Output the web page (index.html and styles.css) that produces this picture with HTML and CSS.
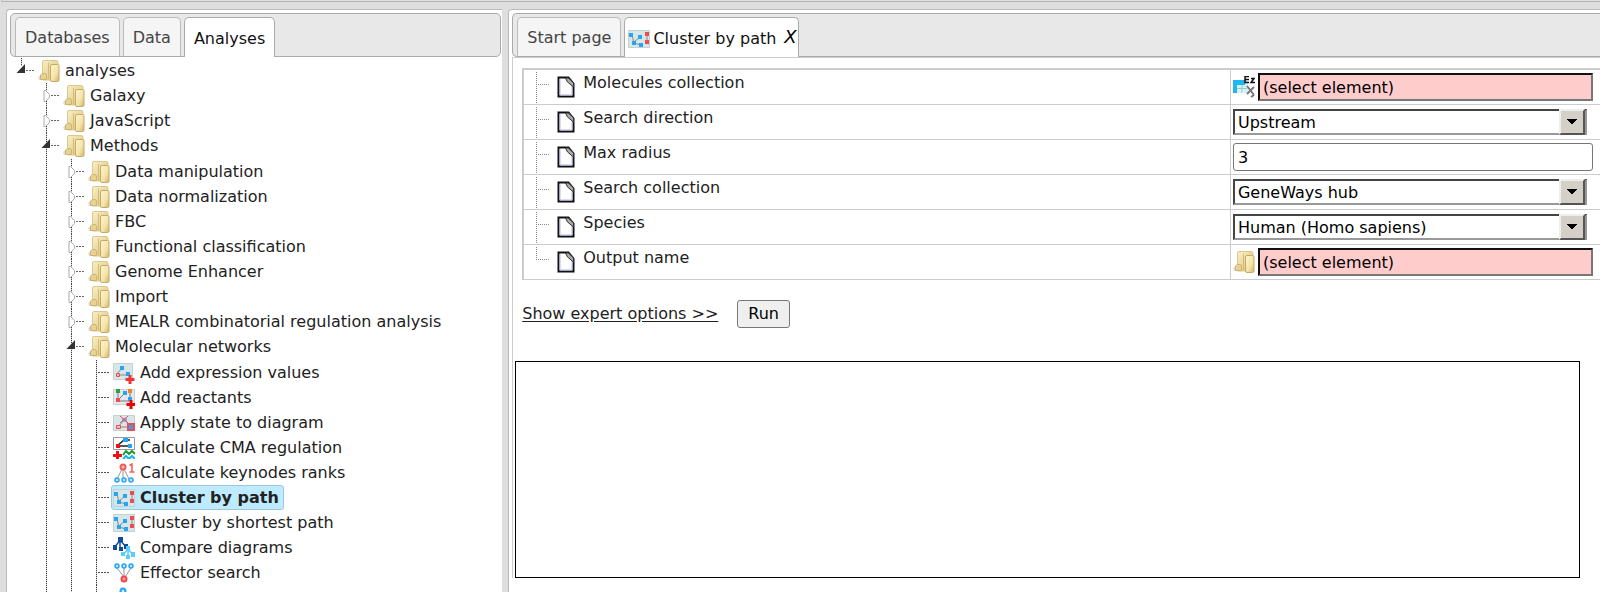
FILE: index.html
```html
<!DOCTYPE html>
<html lang="en">
<head>
<meta charset="utf-8">
<title>Cluster by path</title>
<link rel="stylesheet" href="styles.css">
</head>
<body>
<svg class="sprite" aria-hidden="true">
  <defs>
    <linearGradient id="gold" x1="0" y1="0" x2="1" y2="1">
      <stop offset="0" stop-color="#fbf0c4"/><stop offset="1" stop-color="#d9c07c"/>
    </linearGradient>
    <linearGradient id="page" x1="0" y1="0" x2="1" y2="1">
      <stop offset="0" stop-color="#fff6cf"/><stop offset=".6" stop-color="#f3e3a8"/><stop offset="1" stop-color="#cfb26a"/>
    </linearGradient>
    <symbol id="i-folder" viewBox="0 0 22 22">
      <path d="M0 17l3-2v5H1z" fill="#ddd"/>
      <path d="M4.500 2q0-1.500 1.500-1.500h12q2 0 2 1.500v12l-8 6h-7.500z" fill="url(#gold)" stroke="#dcc88f"/>
      <path d="M10.500 3v16" stroke="#d3bb78"/>
      <path d="M2.500 15l2-1.500h3l1 1.500v4.500h-6z" fill="#e8d292" stroke="#cdb473"/>
      <path d="M12.500 6q0-1.500 1.500-1.500h5.500q1.500 0 1.500 1.500v14q0 1.500-1.500 1.500H14q-1.500 0-1.500-1.500z" fill="url(#page)" stroke="#c7ab65"/>
    </symbol>
    <symbol id="i-closed" viewBox="0 0 22 25">
      <path d="M4 7.500v11h1.500l4-4v-3l-4-4z" fill="#fff" stroke="#aaa"/>
      <path d="M11 12.500h9" stroke="#666" stroke-dasharray="2 1"/>
    </symbol>
    <symbol id="i-open" viewBox="0 0 22 25">
      <path d="M10 6v9H1.500z" fill="#333"/>
      <path d="M11 12.500h9" stroke="#666" stroke-dasharray="2 1"/>
    </symbol>
    <symbol id="i-leaf" viewBox="0 0 22 25">
      <path d="M8 12.500h12" stroke="#555" stroke-dasharray="2 1"/>
    </symbol>
    <symbol id="i-cluster" viewBox="0 0 22 18">
      <path d="M.5.500h21v17H.5z" fill="#d9e6e8" stroke="#c3d1d3"/>
      <path d="M4 5l2 8 7 2M6 12l6-5M19 4v8" fill="none" stroke="#888"/>
      <path d="M1 3h4v4H1zM10 5h4v4h-4zM4 11h4v4H4zM11 13h4v4h-4z" fill="#25a5f5"/>
      <path d="M17 2h4v4h-4zM17 10h4v4h-4z" fill="#f04b50"/>
    </symbol>
    <symbol id="i-addval" viewBox="0 0 22 20">
      <path d="M.5.500h19v16H.5z" fill="#d9e6e8" stroke="#c3d1d3"/>
      <path d="M4 11l5-6M5 12h8" stroke="#888"/>
      <path d="M7 3h4v4H7zM13 9h4v4h-4z" fill="#25a5f5"/>
      <path d="M3.500 10.500h3v3h-3z" fill="#fbb" stroke="#f04b50"/>
      <path d="M15.500 12h3v3h3v3h-3v3h-3v-3h-3v-3h3z" fill="#e33"/>
    </symbol>
    <symbol id="i-addreact" viewBox="0 0 22 20">
      <path d="M.5 1.500h21v15H.5z" fill="#e4e8ee" stroke="#aaa" stroke-dasharray="1 1"/>
      <path d="M5 4v9h11M5 12l7-7M17 4v9" fill="none" stroke="#777"/>
      <path d="M3 1h4v4H3z" fill="#2ba33d"/><path d="M15 1h4v4h-4z" fill="#f58320"/>
      <path d="M10 3h4v4h-4zM15 9h4v4h-4z" fill="#25a5f5"/><path d="M3 10h4v4H3z" fill="#f04b50"/>
      <path d="M16.500 12h3v3h3v3h-3v3h-3v-3h-3v-3h3z" fill="#e00"/>
    </symbol>
    <symbol id="i-state" viewBox="0 0 22 20">
      <path d="M.5 2.500h21v15H.5z" fill="#d9e6e8" stroke="#c3d1d3"/>
      <path d="M5 14l7-8 5 8M5 14h12" fill="none" stroke="#888"/>
      <path d="M9 5h5v4H9z" fill="#8aa9e8"/><path d="M7 3l8 7M15 3l-8 7" stroke="#f04b50"/>
      <path d="M3.500 12.500h4v3h-4z" fill="#fbb" stroke="#f04b50"/>
      <path d="M15 11h6v6h-6z" fill="#25a5f5" stroke="#f04b50" stroke-width="2"/>
    </symbol>
    <symbol id="i-cma" viewBox="0 0 22 22">
      <path d="M.5.500h21v12H.5z" fill="#fff" stroke="#999"/>
      <path d="M4 9l7-6h6M5 9h12" fill="none" stroke="#222" stroke-width="1.500"/>
      <path d="M10 1h5v4h-5zM15 7h4v4h-4z" fill="#25a5f5"/><path d="M3 7h4v4H3z" fill="#e11"/>
      <path d="M3 14h3v3h3v3H6v3H3v-3H0v-3h3z" fill="#e11"/>
      <path d="M10 18l3-4 3 3 3-3 3 3" fill="none" stroke="#1f9a35" stroke-width="2"/>
      <path d="M10 22l3-3 3 3 3-3 3 3" fill="none" stroke="#18b5e8" stroke-width="2"/>
    </symbol>
    <symbol id="i-keynode" viewBox="0 0 22 20">
      <path d="M10 7v9M9 6l-5 10M11 6l5 10" stroke="#999"/>
      <circle cx="10" cy="4" r="2.500" fill="#fbb" stroke="#f25a5e" stroke-width="2"/>
      <path d="M16.500 2.500L19 1v8M16.500 9h5" fill="none" stroke="#f25a5e" stroke-width="1.500"/>
      <g fill="#bfe6ff" stroke="#25a5f5" stroke-width="1.500"><circle cx="4" cy="17" r="2"/><circle cx="11" cy="17" r="2"/><circle cx="18" cy="17" r="2"/></g>
    </symbol>
    <symbol id="i-compare" viewBox="0 0 22 22">
      <path d="M7 3L2 10M7 3v9M7 3l6 7" stroke="#1d4f9b" stroke-width="1.500"/>
      <path d="M5 0h5v5H5zM0 8h4v5H0zM6 10h4v4H6zM11 7h4v5h-4z" fill="#0e4b99"/>
      <path d="M15 12l-5 6M15 12v8M15 12l5 6" stroke="#5cc8fa" stroke-width="1.500"/>
      <path d="M13 9h4v5h-4zM8 15h4v4H8zM13 18h4v4h-4zM18 15h4v5h-4z" fill="#5ccdfd"/>
    </symbol>
    <symbol id="i-effector" viewBox="0 0 22 20">
      <path d="M4 5l7 9M11 5v9M18 5l-6 9" stroke="#999"/>
      <circle cx="11" cy="16" r="2.500" fill="#f99" stroke="#f0484e" stroke-width="2"/>
      <g fill="#bfe6ff" stroke="#25a5f5" stroke-width="1.500"><circle cx="4" cy="3" r="2"/><circle cx="11" cy="3" r="2"/><circle cx="18" cy="3" r="2"/></g>
    </symbol>
    <symbol id="i-chain" viewBox="0 0 22 20">
      <path d="M10 4v12" stroke="#999"/>
      <circle cx="10" cy="3" r="2.500" fill="#bfe6ff" stroke="#25a5f5" stroke-width="2"/>
      <circle cx="10" cy="16" r="2.500" fill="#f99" stroke="#f0484e" stroke-width="2"/>
    </symbol>
    <symbol id="i-doc" viewBox="0 0 18 22">
      <path d="M1.500 1.500h10l5 6v13h-15z" fill="#fff" stroke="#111" stroke-width="2"/>
      <path d="M3 3v16h12V9" fill="none" stroke="#b9b9ee"/>
      <path d="M8.500 2l2 4 6 5v-4l-5-5z" fill="#aaa" stroke="#333"/>
    </symbol>
    <symbol id="i-branch" viewBox="0 0 14 31">
      <path d="M1.500 0v31" stroke="#888" stroke-dasharray="1 1"/><path d="M3 12.500h11" stroke="#888" stroke-dasharray="1 1"/>
    </symbol>
    <symbol id="i-branch-end" viewBox="0 0 14 31">
      <path d="M1.500 0v13" stroke="#888" stroke-dasharray="1 1"/><path d="M3 12.500h11" stroke="#888" stroke-dasharray="1 1"/>
    </symbol>
    <symbol id="i-table" viewBox="0 0 22 22">
      <path d="M0 5h15v12H0z" fill="#d9f3f5"/><path d="M0 4h12v5H0zM0 9h4v8H0z" fill="#1fb6f2"/>
      <path d="M4 12.500h10M9 9v8" stroke="#9cc"/>
      <path d="M16 .5h-4v6h4M12 3.500h4M18 2.500h3l-3 4h4" fill="none" stroke="#111" stroke-width="1.500"/>
      <path d="M14 10l7 9M21 11l-7 7M18 21l3-2" stroke="#777" stroke-width="2"/>
    </symbol>
  </defs>
</svg>

<div class="topbar"></div>
<div class="workspace">
  <aside class="pane">
    <div class="tabs tabs-left" role="tablist">
      <button class="tab" role="tab">Databases</button>
      <button class="tab" role="tab">Data</button>
      <button class="tab active" role="tab" aria-selected="true">Analyses</button>
    </div>
    <ul class="tree root">
      <li><div class="node"><svg class="toggle"><use href="#i-open"/></svg><a href="#"><svg class="icon"><use href="#i-folder"/></svg>analyses</a></div>
        <ul class="tree">
          <li><div class="node"><svg class="toggle"><use href="#i-closed"/></svg><a href="#"><svg class="icon"><use href="#i-folder"/></svg>Galaxy</a></div></li>
          <li><div class="node"><svg class="toggle"><use href="#i-closed"/></svg><a href="#"><svg class="icon"><use href="#i-folder"/></svg>JavaScript</a></div></li>
          <li><div class="node"><svg class="toggle"><use href="#i-open"/></svg><a href="#"><svg class="icon"><use href="#i-folder"/></svg>Methods</a></div>
            <ul class="tree deep">
              <li><div class="node"><svg class="toggle"><use href="#i-closed"/></svg><a href="#"><svg class="icon"><use href="#i-folder"/></svg>Data manipulation</a></div></li>
              <li><div class="node"><svg class="toggle"><use href="#i-closed"/></svg><a href="#"><svg class="icon"><use href="#i-folder"/></svg>Data normalization</a></div></li>
              <li><div class="node"><svg class="toggle"><use href="#i-closed"/></svg><a href="#"><svg class="icon"><use href="#i-folder"/></svg>FBC</a></div></li>
              <li><div class="node"><svg class="toggle"><use href="#i-closed"/></svg><a href="#"><svg class="icon"><use href="#i-folder"/></svg>Functional classification</a></div></li>
              <li><div class="node"><svg class="toggle"><use href="#i-closed"/></svg><a href="#"><svg class="icon"><use href="#i-folder"/></svg>Genome Enhancer</a></div></li>
              <li><div class="node"><svg class="toggle"><use href="#i-closed"/></svg><a href="#"><svg class="icon"><use href="#i-folder"/></svg>Import</a></div></li>
              <li><div class="node"><svg class="toggle"><use href="#i-closed"/></svg><a href="#"><svg class="icon"><use href="#i-folder"/></svg>MEALR combinatorial regulation analysis</a></div></li>
              <li><div class="node"><svg class="toggle"><use href="#i-open"/></svg><a href="#"><svg class="icon"><use href="#i-folder"/></svg>Molecular networks</a></div>
                <ul class="tree deep">
                  <li><div class="node"><svg class="toggle"><use href="#i-leaf"/></svg><a href="#"><svg class="icon"><use href="#i-addval"/></svg>Add expression values</a></div></li>
                  <li><div class="node"><svg class="toggle"><use href="#i-leaf"/></svg><a href="#"><svg class="icon"><use href="#i-addreact"/></svg>Add reactants</a></div></li>
                  <li><div class="node"><svg class="toggle"><use href="#i-leaf"/></svg><a href="#"><svg class="icon"><use href="#i-state"/></svg>Apply state to diagram</a></div></li>
                  <li><div class="node"><svg class="toggle"><use href="#i-leaf"/></svg><a href="#"><svg class="icon"><use href="#i-cma"/></svg>Calculate CMA regulation</a></div></li>
                  <li><div class="node"><svg class="toggle"><use href="#i-leaf"/></svg><a href="#"><svg class="icon"><use href="#i-keynode"/></svg>Calculate keynodes ranks</a></div></li>
                  <li><div class="node"><svg class="toggle"><use href="#i-leaf"/></svg><a href="#" class="selected"><svg class="icon"><use href="#i-cluster"/></svg>Cluster by path</a></div></li>
                  <li><div class="node"><svg class="toggle"><use href="#i-leaf"/></svg><a href="#"><svg class="icon"><use href="#i-cluster"/></svg>Cluster by shortest path</a></div></li>
                  <li><div class="node"><svg class="toggle"><use href="#i-leaf"/></svg><a href="#"><svg class="icon"><use href="#i-compare"/></svg>Compare diagrams</a></div></li>
                  <li><div class="node"><svg class="toggle"><use href="#i-leaf"/></svg><a href="#"><svg class="icon"><use href="#i-effector"/></svg>Effector search</a></div></li>
                  <li><div class="node"><svg class="toggle"><use href="#i-leaf"/></svg><a href="#" aria-label="Next analysis"><svg class="icon"><use href="#i-chain"/></svg></a></div></li>
                </ul>
              </li>
            </ul>
          </li>
        </ul>
      </li>
    </ul>
  </aside>

  <main class="pane">
    <div class="tabs tabs-right" role="tablist">
      <button class="tab" role="tab">Start page</button>
      <button class="tab active with-icon" role="tab" aria-selected="true"><svg class="icon"><use href="#i-cluster"/></svg>Cluster by path<span class="close">X</span></button>
    </div>
    <form class="content">
      <table class="props">
        <tr><td class="name"><div class="prop"><svg class="branch"><use href="#i-branch"/></svg><svg class="doc"><use href="#i-doc"/></svg><label for="molecules">Molecules collection</label></div></td>
          <td class="value"><div class="field"><svg class="icon"><use href="#i-table"/></svg><input class="missing" id="molecules" value="(select element)"></div></td></tr>
        <tr><td class="name"><div class="prop"><svg class="branch"><use href="#i-branch"/></svg><svg class="doc"><use href="#i-doc"/></svg><label for="direction">Search direction</label></div></td>
          <td class="value"><div class="field drop"><select id="direction"><option>Upstream</option></select></div></td></tr>
        <tr><td class="name"><div class="prop"><svg class="branch"><use href="#i-branch"/></svg><svg class="doc"><use href="#i-doc"/></svg><label for="radius">Max radius</label></div></td>
          <td class="value"><div class="field"><input class="plain" id="radius" value="3"></div></td></tr>
        <tr><td class="name"><div class="prop"><svg class="branch"><use href="#i-branch"/></svg><svg class="doc"><use href="#i-doc"/></svg><label for="collection">Search collection</label></div></td>
          <td class="value"><div class="field drop"><select id="collection"><option>GeneWays hub</option></select></div></td></tr>
        <tr><td class="name"><div class="prop"><svg class="branch"><use href="#i-branch"/></svg><svg class="doc"><use href="#i-doc"/></svg><label for="species">Species</label></div></td>
          <td class="value"><div class="field drop"><select id="species"><option>Human (Homo sapiens)</option></select></div></td></tr>
        <tr><td class="name"><div class="prop"><svg class="branch"><use href="#i-branch-end"/></svg><svg class="doc"><use href="#i-doc"/></svg><label for="output">Output name</label></div></td>
          <td class="value"><div class="field"><svg class="icon"><use href="#i-folder"/></svg><input class="missing" id="output" value="(select element)"></div></td></tr>
      </table>
      <div class="actions"><a href="#">Show expert options &gt;&gt;</a><button class="run" type="button">Run</button></div>
      <div class="log"></div>
    </form>
  </main>
</div>
</body>
</html>
```

FILE: styles.css
```css
* { box-sizing: border-box; }

body {
  margin: 0;
  height: 100vh;
  overflow: hidden;
  display: flex;
  flex-direction: column;
  background: #dedede;
  color: #222;
  font: 16px/24px Verdana, "DejaVu Sans", sans-serif;
}

button, input, select { font: inherit; color: #000; }
svg { flex: none; overflow: visible; }
.sprite { position: absolute; width: 0; height: 0; }

.topbar {
  flex: none;
  height: 2px;
  margin: 0 0 7px 1px;
  border-bottom: 1px solid #b5b5b5;
  border-left: 1px solid #b5b5b5;
  border-radius: 0 0 0 3px;
}

.workspace {
  flex: 1;
  min-height: 0;
  display: grid;
  grid-template-columns: minmax(0, 5fr) minmax(0, 11fr);
  column-gap: 6px;
  padding-left: 6px;
}

.pane {
  min-width: 0;
  overflow: hidden;
  background: #fff;
  border: 1px solid #bbb;
  border-width: 1px 0 0 1px;
  border-radius: 4px 0 0 0;
  padding: 3px 0 0 3px;
}

.tabs {
  display: flex;
  align-items: flex-end;
  gap: 3px;
  height: 44px;
  padding: 0 4px;
  background: #e8e8e8;
  border: 1px solid #aaa;
  border-radius: 5px;
}
.tabs-left { margin-right: 1px; }
.tabs-right { border-right: 0; border-radius: 5px 0 0 5px; }

.tab {
  height: 39px;
  padding: 2px 9px 0;
  border: 1px solid #bbb;
  border-bottom: 0;
  border-radius: 5px 5px 0 0;
  background: #f5f5f5;
  color: #444;
  white-space: nowrap;
}
.tab.active {
  height: 40px;
  margin-bottom: -1px;
  background: #fff;
  border-color: #aaa;
  color: #111;
}
.with-icon { display: flex; align-items: center; padding: 2px 1px 0 3px; }
.with-icon .icon { height: 18px; margin-right: 3px; }
.close { margin: -4px 0 0 8px; font-size: 18px; font-style: italic; color: #000; }

.tree { list-style: none; margin: 0; padding: 0 0 0 25px; }
.root { padding: 1px 0 0 5px; }
.deep { padding-top: 1px; }
.tree li {
  background: repeating-linear-gradient(#444 0 1px, #ccc 1px 2px) 6px 0 / 1px 100% no-repeat;
}
.root > li { background-size: 1px 8px; }

.node { display: flex; height: 25px; }
.toggle { width: 22px; height: 25px; margin-right: -1px; }
.node a {
  display: flex;
  align-items: center;
  padding: 0 4px 0 1px;
  border: 1px solid transparent;
  border-radius: 3px;
  color: #222;
  text-decoration: none;
  white-space: nowrap;
}
.node .icon { margin-right: 5px; }
.node a.selected { background: #beebff; border-color: #9cc7dc; font-weight: bold; }
.icon { width: 22px; height: 22px; }

.content { border-left: 1px solid #ccc; border-top: 1px solid #ccc; padding-top: 10px; }

.props {
  width: calc(100% - 9px);
  margin-left: 9px;
  table-layout: fixed;
  border-collapse: separate;
  border-spacing: 0;
  border-left: 2px solid #ccc;
  border-top: 2px solid #ccc;
}
.props td { height: 35px; padding: 0; border-bottom: 1px solid #ccc; }
.props .value { width: 34.4%; border-left: 1px solid #ccc; }

.prop { display: flex; align-items: flex-start; height: 34px; padding: 2px 0 0 11px; }
.branch { width: 14px; height: 31px; margin-right: 8px; }
.doc { width: 18px; height: 22px; margin: 4px 8px 0 0; }
.prop label { line-height: 22px; }

.field { display: flex; align-items: center; height: 34px; padding: 0 7px 0 2px; position: relative; }
.field .icon { margin-right: 3px; }
.field input { flex: 1; min-width: 0; height: 28px; }
.missing { padding: 0 3px; background: #fcc; border: 2px solid; border-color: #111 #777 #777 #111; }
.plain { padding: 0 4px; background: #fff; border: 1px solid #777; border-radius: 3px; }

.drop { padding-right: 13px; }
.drop select {
  flex: 1;
  height: 26px;
  padding: 0 24px 0 3px;
  appearance: none;
  background: #fff;
  border: 2px solid;
  border-color: #444 #999 #999 #444;
  border-radius: 0;
}
.drop::after {
  content: "";
  position: absolute;
  right: 15px;
  width: 22px;
  height: 22px;
  border: 2px solid;
  border-color: #eee #555 #555 #eee;
  background: linear-gradient(#000, #000) center 8px / 10px 1px no-repeat,
    linear-gradient(#000, #000) center 9px / 8px 1px no-repeat,
    linear-gradient(#000, #000) center 10px / 6px 1px no-repeat,
    linear-gradient(#000, #000) center 11px / 4px 1px no-repeat,
    linear-gradient(#000, #000) center 12px / 2px 1px no-repeat, #d4d0c8;
  pointer-events: none;
}

.actions { display: flex; align-items: center; gap: 19px; margin: 20px 0 0 9px; }
.actions a { color: #222; text-underline-offset: 2px; }
.run {
  height: 28px;
  padding: 0 10px;
  background: #efefef;
  border: 1px solid #777;
  border-radius: 3px;
}

.log { height: 217px; margin: 33px 20px 0 2px; border: 1px solid #000; }
```
